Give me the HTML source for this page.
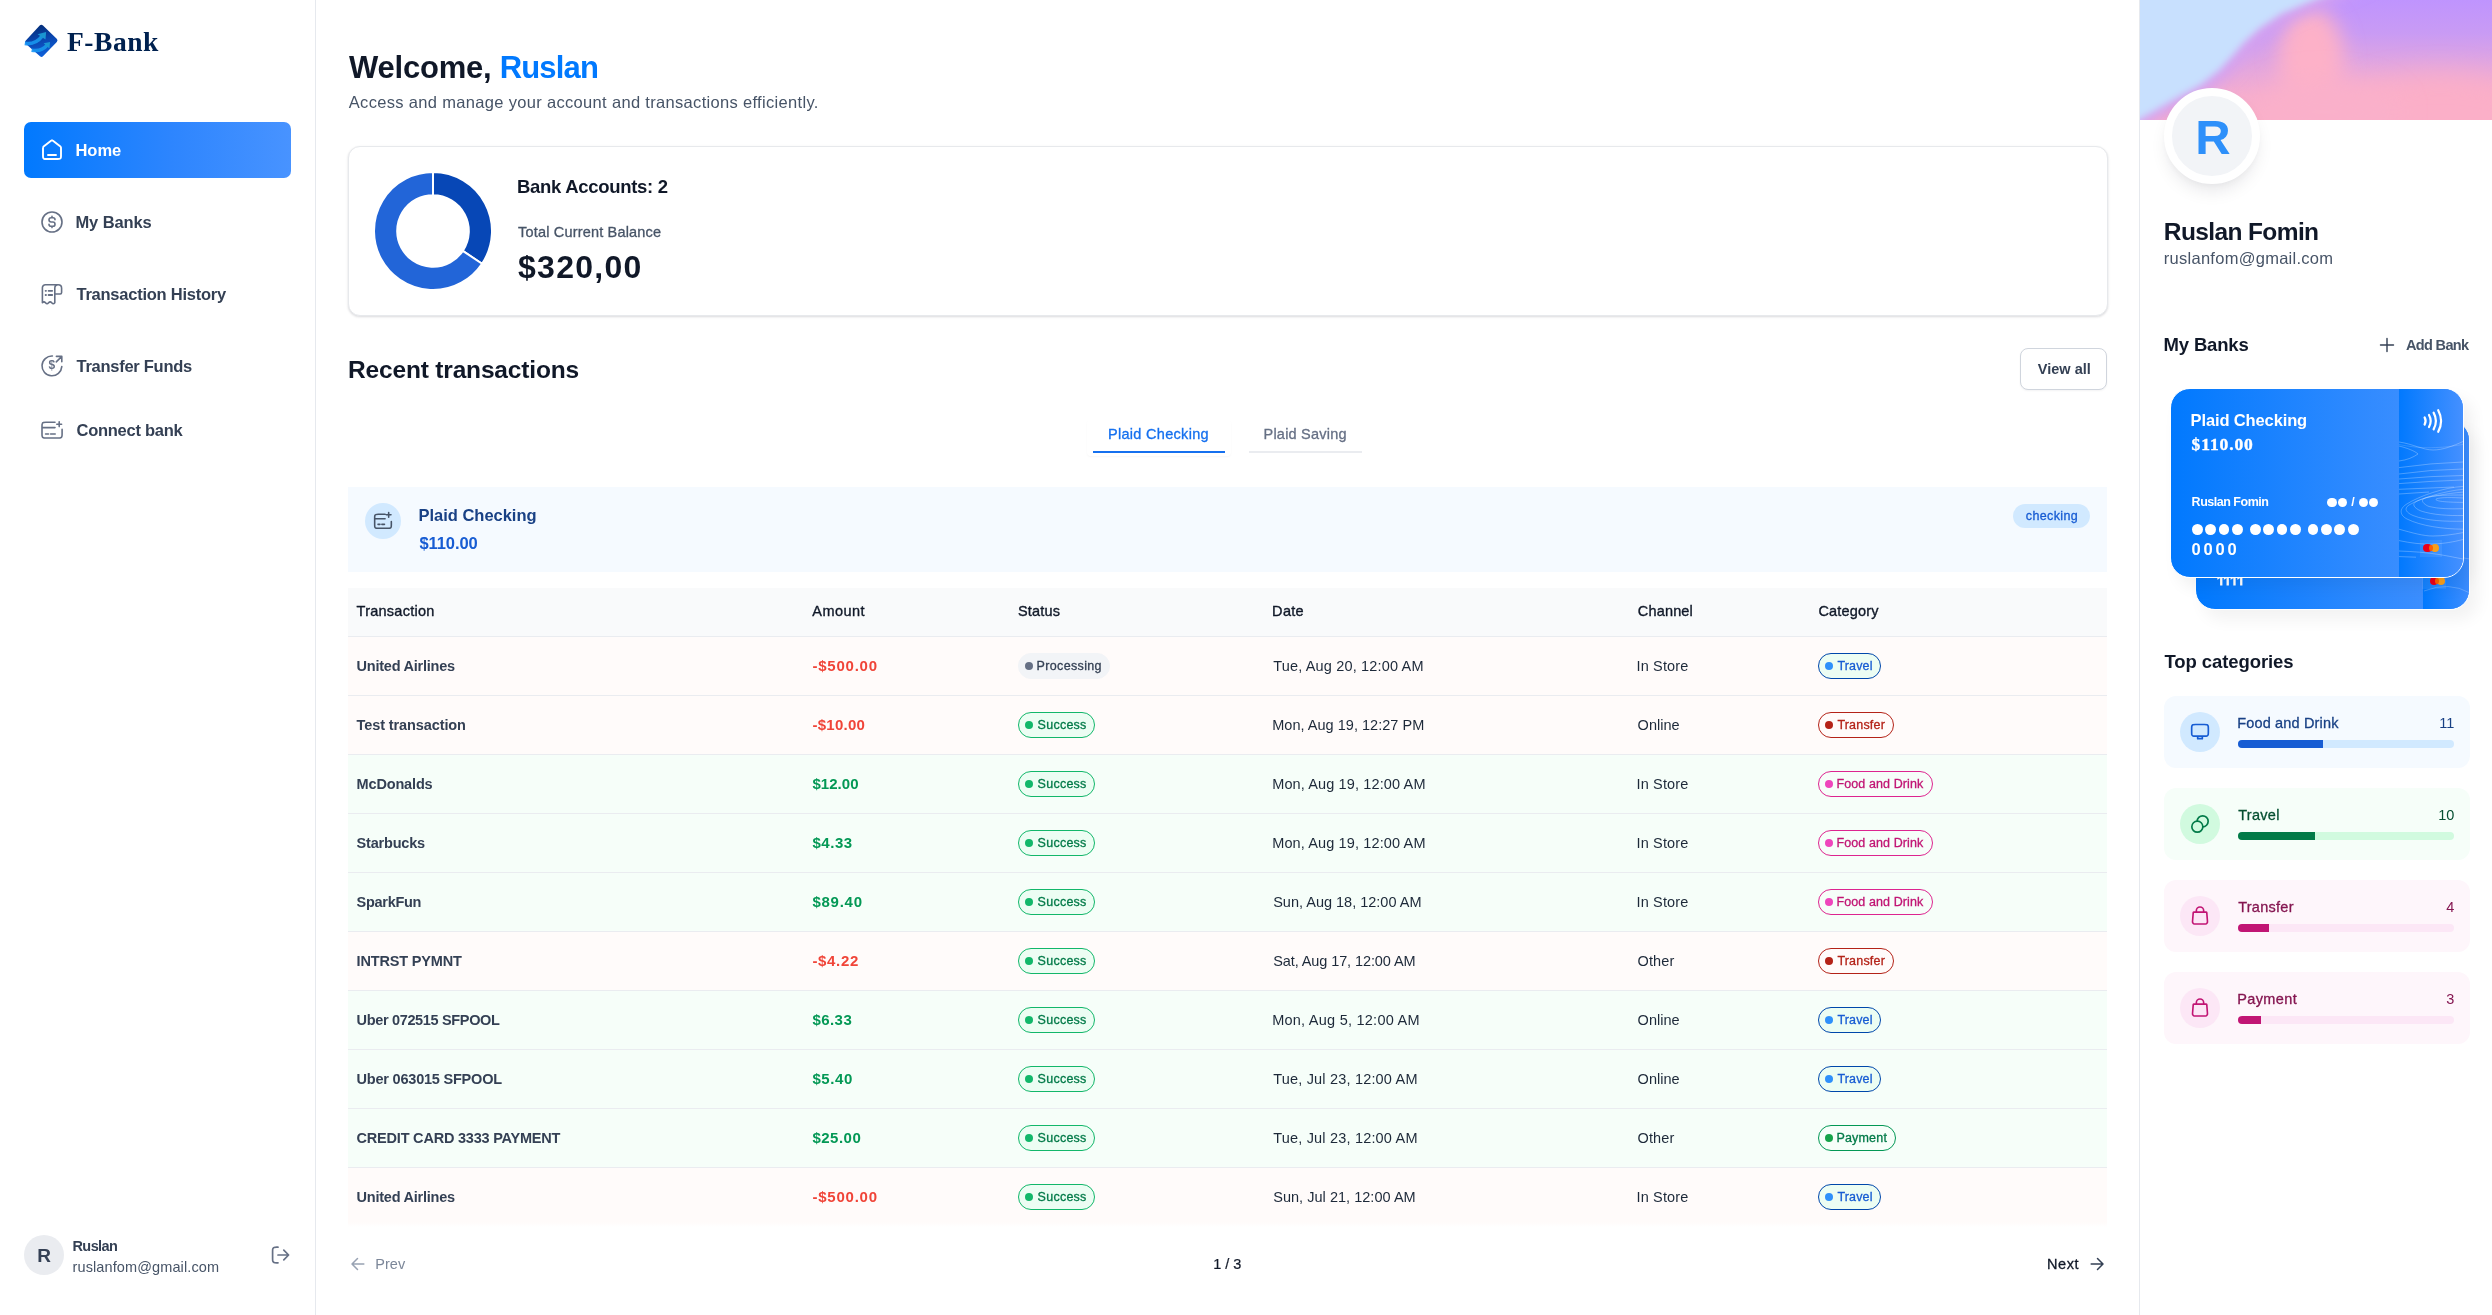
<!DOCTYPE html>
<html lang="en"><head><meta charset="utf-8"><title>F-Bank</title>
<style>
*{box-sizing:border-box;margin:0;padding:0}
html,body{width:2492px;height:1315px;overflow:hidden;background:#fff}
body{position:relative;font-family:"Liberation Sans",sans-serif;color:#101828;will-change:transform}
.t{position:absolute;white-space:nowrap}
.b{position:absolute}
svg{position:absolute;overflow:visible}
.ico{fill:none;stroke:#667085;stroke-width:1.6;stroke-linecap:round;stroke-linejoin:round}
</style></head><body>

<aside>
<div class="b" style="left:315px;top:0px;width:1px;height:1315px;background:#e6e9ee"></div>
<svg style="left:23px;top:23px" width="36" height="36" viewBox="0 0 36 36">
<defs><linearGradient id="lg1" x1="0.35" y1="0" x2="0.6" y2="1"><stop offset="0" stop-color="#032c74"/><stop offset="0.45" stop-color="#0a45ae"/><stop offset="1" stop-color="#0f62dc"/></linearGradient>
<linearGradient id="lg2" gradientUnits="userSpaceOnUse" x1="2" y1="28" x2="26" y2="10"><stop offset="0" stop-color="#1592fb"/><stop offset="0.6" stop-color="#1a98ea"/><stop offset="1" stop-color="#1fa3cf"/></linearGradient></defs>
<path d="M16.700 2.500Q18.300.8 20 2.500L33.700 15.800Q35.300 17.400 33.800 19L20.200 33.100Q18.600 34.700 17 33.300L2.700 20.800Q1.100 19.300 2.600 17.700Z" fill="url(#lg1)"/>
<g opacity=".9"><path d="M1.800 20.300Q12.500 22 19.300 13" fill="none" stroke="url(#lg2)" stroke-width="3.700"/><path d="M14.600 11.300L23.100 9.100L22.500 16.600Z" fill="#1d9fd6"/>
<path d="M8.600 27.200Q18.500 29 24.200 22.200" fill="none" stroke="url(#lg2)" stroke-width="3.500"/><path d="M20.600 20.200L27.100 18.900L26.400 25.600Z" fill="#1d9fd6"/></g>
</svg>
<span class="t" style="top:22px;font-size:27.5px;line-height:39px;color:#00214f;left:67px;font-weight:700;font-family:'Liberation Serif',serif;letter-spacing:0.532px;">F-Bank</span>
<div class="b" style="left:24px;top:122px;width:267px;height:56px;border-radius:7px;background:linear-gradient(90deg,#0179fe 0%,#2d85fe 55%,#4893ff 100%)"></div>
<svg style="left:40px;top:138px" width="24" height="24" viewBox="0 0 24 24" fill="none" stroke="#fff" stroke-width="1.9" stroke-linecap="round" stroke-linejoin="round">
<path d="M8 17h8M11.02 2.76 4.24 8.04c-.45.35-.68.53-.84.75a2 2 0 0 0-.32.65C3 9.7 3 9.99 3 10.57V17.8c0 1.12 0 1.68.22 2.1.19.38.5.69.87.88.43.22.99.22 2.11.22h11.6c1.12 0 1.68 0 2.1-.22.38-.19.69-.5.88-.87.22-.43.22-.99.22-2.11v-7.23c0-.58 0-.87-.07-1.13a2 2 0 0 0-.32-.65c-.16-.22-.39-.4-.84-.75l-6.79-5.28c-.35-.27-.52-.41-.72-.46a1 1 0 0 0-.52 0c-.2.05-.37.19-.72.46Z"/></svg>
<span class="t" style="top:138px;font-size:16.5px;line-height:24px;color:#fff;left:75.5px;font-weight:700;letter-spacing:-0.055px;">Home</span>
<svg class="ico" style="left:40px;top:210px" width="24" height="24" viewBox="0 0 24 24"><circle cx="12" cy="12" r="10"/><path transform="translate(12 12) scale(.86) translate(-12 -12)" stroke-width="1.850" d="M8.500 14.670c0 1.290 1.040 2.330 2.330 2.330H13a2.500 2.500 0 0 0 0-5h-2a2.500 2.500 0 0 1 0-5h2.170c1.290 0 2.330 1.040 2.330 2.330M12 5.500V7m0 10v1.500"/></svg>
<span class="t" style="top:210px;font-size:16.5px;line-height:24px;color:#344054;left:75.5px;font-weight:700;letter-spacing:-0.122px;">My Banks</span>
<svg class="ico" style="left:40px;top:282px" width="24" height="24" viewBox="0 0 24 24"><path d="M14.800 20.800V6.200c0-1.900 1.500-3.400 3.400-3.400s3.400 1.500 3.400 3.400v4.400c0 .800-.600 1.400-1.400 1.400h-5.400M18.200 2.800H5.400c-1.700 0-3 1.300-3 3v15c1.050-1.200 2.050-1.200 3.100 0s2.050 1.200 3.100 0 2.050-1.200 3.100 0 2.050 1.200 3.100 0"/><path d="M5.600 8.800h.4M8.600 8.800h3.600M5.600 13h.4M8.600 13h3.600" stroke-width="1.800"/></svg>
<span class="t" style="top:282px;font-size:16.5px;line-height:24px;color:#344054;left:76.5px;font-weight:700;letter-spacing:-0.243px;">Transaction History</span>
<svg class="ico" style="left:40px;top:354px" width="24" height="24" viewBox="0 0 24 24"><path d="M21.800 12.600A9.900 9.900 0 1 1 12.400 2M16.400 2.400h5.400v5.400M21.600 2.600l-5.300 5.300"/><text x="11.900" y="15.300" text-anchor="middle" font-family="Liberation Sans,sans-serif" font-weight="700" font-size="12" fill="#667085" stroke="none">$</text></svg>
<span class="t" style="top:354px;font-size:16.5px;line-height:24px;color:#344054;left:76.5px;font-weight:700;letter-spacing:-0.270px;">Transfer Funds</span>
<svg class="ico" style="left:40px;top:418px" width="24" height="24" viewBox="0 0 24 24"><path d="M15 4.200H6c-1.400 0-2.100 0-2.600.300-.500.200-.900.600-1.100 1.100-.300.500-.300 1.200-.300 2.600v7.800c0 1.400 0 2.100.300 2.600.200.500.600.900 1.100 1.100.500.300 1.200.300 2.600.300h12.100c1.400 0 2.100 0 2.600-.300.500-.200.900-.600 1.100-1.100.300-.500.300-1.200.300-2.600v-4.600M2.200 9.600H15M19.200 3.800v4.800M16.800 6.200h4.800M5.600 16h2.900M10.600 16h4.600"/></svg>
<span class="t" style="top:418px;font-size:16.5px;line-height:24px;color:#344054;left:76.5px;font-weight:700;letter-spacing:-0.265px;">Connect bank</span>
<div class="b" style="left:24px;top:1235px;width:40px;height:40px;border-radius:50%;background:#eaecf0"></div>
<span class="t" style="top:1242px;font-size:19px;line-height:27px;color:#344054;left:37.2px;font-weight:700;">R</span>
<span class="t" style="top:1236px;font-size:14.5px;line-height:20px;color:#344054;left:72.5px;font-weight:700;letter-spacing:-0.597px;">Ruslan</span>
<span class="t" style="top:1257px;font-size:14.5px;line-height:20px;color:#475467;left:72.5px;letter-spacing:0.118px;">ruslanfom@gmail.com</span>
<svg class="ico" style="left:269px;top:1243px;stroke-width:1.700" width="24" height="24" viewBox="0 0 24 24"><path d="M9 4.200H7.600c-1.400 0-2.100 0-2.600.3-.5.200-.800.600-1.100 1.100-.3.500-.3 1.200-.3 2.600v7.600c0 1.400 0 2.100.3 2.600.2.500.6.800 1.100 1.100.5.300 1.200.3 2.600.3H9M14.800 7.200l4.800 4.800-4.800 4.800M19.400 12H9"/></svg>
</aside>
<main>
<span class="t" style="top:48px;font-size:31px;line-height:39px;color:#101828;left:349px;font-weight:700;letter-spacing:-0.219px;">Welcome,</span>
<span class="t" style="top:48px;font-size:31px;line-height:39px;color:#0179fe;left:499.7px;font-weight:700;letter-spacing:-0.823px;">Ruslan</span>
<span class="t" style="top:90px;font-size:16.5px;line-height:24px;color:#475467;left:348.8px;letter-spacing:0.321px;">Access and manage your account and transactions efficiently.</span>
<div class="b" style="left:348px;top:146px;width:1760px;height:170px;border:1px solid #e7e9ec;border-radius:12px;background:#fff;box-shadow:0 1px 3px rgba(16,24,40,.10),0 1px 2px rgba(16,24,40,.06)"></div>
<svg style="left:373px;top:171px" width="120" height="120" viewBox="0 0 120 120">
<path d="M60.00 1.00A59 59 0 0 1 109.06 92.78L89.77 79.89A35.8 35.8 0 0 0 60.00 24.20Z" fill="#0747b6" stroke="#fff" stroke-width="2" stroke-linejoin="round"/>
<path d="M109.06 92.78A59 59 0 1 1 60.00 1.00L60.00 24.20A35.8 35.8 0 1 0 89.77 79.89Z" fill="#2265d8" stroke="#fff" stroke-width="2" stroke-linejoin="round"/>
</svg>
<span class="t" style="top:173px;font-size:18.5px;line-height:27px;color:#101828;left:517px;font-weight:700;letter-spacing:-0.298px;">Bank Accounts: 2</span>
<span class="t" style="top:222px;font-size:14.5px;line-height:20px;color:#475467;left:518px;letter-spacing:0.181px;-webkit-text-stroke:0.3px #475467;">Total Current Balance</span>
<span class="t" style="top:248px;font-size:32px;line-height:38px;color:#101828;left:518px;font-weight:700;letter-spacing:1.271px;">$320,00</span>
<span class="t" style="top:354px;font-size:24.5px;line-height:31px;color:#101828;left:348px;font-weight:700;letter-spacing:-0.170px;">Recent transactions</span>
<div class="b" style="left:2020px;top:348px;width:87px;height:42px;border:1px solid #d0d5dd;border-radius:8px;background:#fff;box-shadow:0 1px 2px rgba(16,24,40,.05)"></div>
<span class="t" style="top:359px;font-size:14.5px;line-height:20px;color:#344054;left:2037.8px;font-weight:700;letter-spacing:0.014px;">View all</span>
<div class="b" style="left:1087px;top:420px;width:144px;height:36px;border-radius:4px;box-shadow:0 1px 2px rgba(16,24,40,.035)"></div>
<span class="t" style="top:424px;font-size:14.5px;line-height:20px;color:#1570ef;left:1108px;letter-spacing:0.296px;-webkit-text-stroke:0.3px #1570ef;">Plaid Checking</span>
<div class="b" style="left:1093px;top:450.5px;width:132px;height:2px;background:#1570ef"></div>
<span class="t" style="top:424px;font-size:14.5px;line-height:20px;color:#667085;left:1263.5px;letter-spacing:0.223px;-webkit-text-stroke:0.3px #667085;">Plaid Saving</span>
<div class="b" style="left:1249px;top:450.5px;width:113px;height:2px;background:#eaecf0"></div>
<div class="b" style="left:348px;top:487px;width:1759px;height:84.5px;background:#f5faff"></div>
<div class="b" style="left:365px;top:503px;width:36px;height:36px;border-radius:50%;background:#d1e9ff"></div>
<svg class="ico" style="left:373px;top:511px;stroke:#475467;stroke-width:1.900" width="20" height="20" viewBox="0 0 24 24"><path d="M14.500 4H6.200c-1.600 0-2.400 0-3 .4-.4.200-.700.500-.900.900-.3.600-.3 1.400-.3 3v8.200c0 1.600 0 2.400.3 3 .2.400.5.700.900.900.6.300 1.400.3 3 .3h11.600c1.600 0 2.400 0 3-.3.400-.2.700-.5.900-.9.300-.6.300-1.400.3-3v-4M2.200 9.200h12.300M18.800 1.800v5.600M16 4.600h5.600M6 16h2.400M10.600 16h3.200"/></svg>
<span class="t" style="top:503px;font-size:16.5px;line-height:24px;color:#194185;left:418.5px;font-weight:700;letter-spacing:-0.015px;">Plaid Checking</span>
<span class="t" style="top:531px;font-size:16.5px;line-height:24px;color:#175cd3;left:419.5px;font-weight:700;letter-spacing:-0.093px;">$110.00</span>
<div class="b" style="left:2013px;top:503.5px;width:77px;height:24px;border-radius:12px;background:#d1e9ff"></div>
<span class="t" style="top:507px;font-size:12.5px;line-height:18px;color:#175cd3;left:2025.8px;letter-spacing:0.374px;-webkit-text-stroke:0.3px #175cd3;">checking</span>
<div class="b" style="left:348px;top:588px;width:1759px;height:48.5px;background:#f9fafb"></div>
<div class="b" style="left:348px;top:636px;width:1759px;height:1px;background:#eaecf0"></div>
<span class="t" style="top:601px;font-size:14.5px;line-height:20px;color:#101828;left:356.6px;letter-spacing:0.245px;-webkit-text-stroke:0.35px #101828;">Transaction</span>
<span class="t" style="top:601px;font-size:14.5px;line-height:20px;color:#101828;left:812.3px;letter-spacing:0.451px;-webkit-text-stroke:0.35px #101828;">Amount</span>
<span class="t" style="top:601px;font-size:14.5px;line-height:20px;color:#101828;left:1018px;letter-spacing:0.169px;-webkit-text-stroke:0.35px #101828;">Status</span>
<span class="t" style="top:601px;font-size:14.5px;line-height:20px;color:#101828;left:1272.1px;letter-spacing:0.312px;-webkit-text-stroke:0.35px #101828;">Date</span>
<span class="t" style="top:601px;font-size:14.5px;line-height:20px;color:#101828;left:1637.8px;letter-spacing:0.168px;-webkit-text-stroke:0.35px #101828;">Channel</span>
<span class="t" style="top:601px;font-size:14.5px;line-height:20px;color:#101828;left:1818.4px;letter-spacing:0.174px;-webkit-text-stroke:0.35px #101828;">Category</span>
<div class="b" style="left:348px;top:637px;width:1759px;height:58px;background:#fffbfa"></div>
<div class="b" style="left:348px;top:695px;width:1759px;height:1px;background:#eaecf0"></div>
<span class="t" style="top:656px;font-size:14.5px;line-height:20px;color:#344054;left:356.6px;font-weight:700;letter-spacing:-0.233px;">United Airlines</span>
<span class="t" style="top:655px;font-size:15px;line-height:21px;color:#f04438;left:812.4px;font-weight:700;letter-spacing:0.775px;">-$500.00</span>
<div class="b" style="left:1018px;top:653.2px;width:91.5px;height:25.6px;border:1.5px solid #f2f4f7;border-radius:13px;background:#f2f4f7"></div><div class="b" style="left:1025.2px;top:662px;width:8px;height:8px;border-radius:50%;background:#667085"></div><span class="t" style="top:657px;font-size:12.5px;line-height:18px;color:#344054;left:1036.6px;letter-spacing:0.346px;-webkit-text-stroke:0.3px #344054;">Processing</span>
<span class="t" style="top:656px;font-size:14.5px;line-height:20px;color:#1d2939;left:1273.2px;letter-spacing:0.165px;">Tue, Aug 20, 12:00 AM</span>
<span class="t" style="top:656px;font-size:14.5px;line-height:20px;color:#1d2939;left:1636.6px;letter-spacing:0.127px;">In Store</span>
<div class="b" style="left:1817.8px;top:653.2px;width:63.3px;height:25.6px;border:1.5px solid #0047ab;border-radius:13px;background:#ecfdf3"></div><div class="b" style="left:1825.0px;top:662px;width:8px;height:8px;border-radius:50%;background:#2e90fa"></div><span class="t" style="top:657px;font-size:12.5px;line-height:18px;color:#175cd3;left:1837.4px;letter-spacing:0.162px;-webkit-text-stroke:0.3px #175cd3;">Travel</span>
<div class="b" style="left:348px;top:696px;width:1759px;height:58px;background:#fffbfa"></div>
<div class="b" style="left:348px;top:754px;width:1759px;height:1px;background:#eaecf0"></div>
<span class="t" style="top:715px;font-size:14.5px;line-height:20px;color:#344054;left:356.6px;font-weight:700;letter-spacing:-0.104px;">Test transaction</span>
<span class="t" style="top:714px;font-size:15px;line-height:21px;color:#f04438;left:812.4px;font-weight:700;letter-spacing:0.278px;">-$10.00</span>
<div class="b" style="left:1018px;top:712.2px;width:77px;height:25.6px;border:1.5px solid #12b76a;border-radius:13px;background:#ecfdf3"></div><div class="b" style="left:1025.2px;top:721px;width:8px;height:8px;border-radius:50%;background:#12b76a"></div><span class="t" style="top:716px;font-size:12.5px;line-height:18px;color:#027a48;left:1037.6px;letter-spacing:0.251px;-webkit-text-stroke:0.3px #027a48;">Success</span>
<span class="t" style="top:715px;font-size:14.5px;line-height:20px;color:#1d2939;left:1272.2px;letter-spacing:0.027px;">Mon, Aug 19, 12:27 PM</span>
<span class="t" style="top:715px;font-size:14.5px;line-height:20px;color:#1d2939;left:1637.6px;letter-spacing:0.010px;">Online</span>
<div class="b" style="left:1817.8px;top:712.2px;width:76px;height:25.6px;border:1.5px solid #b42318;border-radius:13px;background:transparent"></div><div class="b" style="left:1825.0px;top:721px;width:8px;height:8px;border-radius:50%;background:#b42318"></div><span class="t" style="top:716px;font-size:12.5px;line-height:18px;color:#b42318;left:1837.4px;letter-spacing:0.198px;-webkit-text-stroke:0.3px #b42318;">Transfer</span>
<div class="b" style="left:348px;top:755px;width:1759px;height:58px;background:#f6fef9"></div>
<div class="b" style="left:348px;top:813px;width:1759px;height:1px;background:#eaecf0"></div>
<span class="t" style="top:774px;font-size:14.5px;line-height:20px;color:#344054;left:356.6px;font-weight:700;letter-spacing:-0.160px;">McDonalds</span>
<span class="t" style="top:773px;font-size:15px;line-height:21px;color:#039855;left:812.4px;font-weight:700;letter-spacing:0.053px;">$12.00</span>
<div class="b" style="left:1018px;top:771.2px;width:77px;height:25.6px;border:1.5px solid #12b76a;border-radius:13px;background:#ecfdf3"></div><div class="b" style="left:1025.2px;top:780px;width:8px;height:8px;border-radius:50%;background:#12b76a"></div><span class="t" style="top:775px;font-size:12.5px;line-height:18px;color:#027a48;left:1037.6px;letter-spacing:0.251px;-webkit-text-stroke:0.3px #027a48;">Success</span>
<span class="t" style="top:774px;font-size:14.5px;line-height:20px;color:#1d2939;left:1272.2px;letter-spacing:0.127px;">Mon, Aug 19, 12:00 AM</span>
<span class="t" style="top:774px;font-size:14.5px;line-height:20px;color:#1d2939;left:1636.6px;letter-spacing:0.127px;">In Store</span>
<div class="b" style="left:1817.8px;top:771.2px;width:115px;height:25.6px;border:1.5px solid #dd2590;border-radius:13px;background:transparent"></div><div class="b" style="left:1825.0px;top:780px;width:8px;height:8px;border-radius:50%;background:#ee46bc"></div><span class="t" style="top:775px;font-size:12.5px;line-height:18px;color:#c11574;left:1836.4px;letter-spacing:0.107px;-webkit-text-stroke:0.3px #c11574;">Food and Drink</span>
<div class="b" style="left:348px;top:814px;width:1759px;height:58px;background:#f6fef9"></div>
<div class="b" style="left:348px;top:872px;width:1759px;height:1px;background:#eaecf0"></div>
<span class="t" style="top:833px;font-size:14.5px;line-height:20px;color:#344054;left:356.6px;font-weight:700;letter-spacing:-0.194px;">Starbucks</span>
<span class="t" style="top:832px;font-size:15px;line-height:21px;color:#039855;left:812.4px;font-weight:700;letter-spacing:0.551px;">$4.33</span>
<div class="b" style="left:1018px;top:830.2px;width:77px;height:25.6px;border:1.5px solid #12b76a;border-radius:13px;background:#ecfdf3"></div><div class="b" style="left:1025.2px;top:839px;width:8px;height:8px;border-radius:50%;background:#12b76a"></div><span class="t" style="top:834px;font-size:12.5px;line-height:18px;color:#027a48;left:1037.6px;letter-spacing:0.251px;-webkit-text-stroke:0.3px #027a48;">Success</span>
<span class="t" style="top:833px;font-size:14.5px;line-height:20px;color:#1d2939;left:1272.2px;letter-spacing:0.127px;">Mon, Aug 19, 12:00 AM</span>
<span class="t" style="top:833px;font-size:14.5px;line-height:20px;color:#1d2939;left:1636.6px;letter-spacing:0.127px;">In Store</span>
<div class="b" style="left:1817.8px;top:830.2px;width:115px;height:25.6px;border:1.5px solid #dd2590;border-radius:13px;background:transparent"></div><div class="b" style="left:1825.0px;top:839px;width:8px;height:8px;border-radius:50%;background:#ee46bc"></div><span class="t" style="top:834px;font-size:12.5px;line-height:18px;color:#c11574;left:1836.4px;letter-spacing:0.107px;-webkit-text-stroke:0.3px #c11574;">Food and Drink</span>
<div class="b" style="left:348px;top:873px;width:1759px;height:58px;background:#f6fef9"></div>
<div class="b" style="left:348px;top:931px;width:1759px;height:1px;background:#eaecf0"></div>
<span class="t" style="top:892px;font-size:14.5px;line-height:20px;color:#344054;left:356.6px;font-weight:700;letter-spacing:-0.288px;">SparkFun</span>
<span class="t" style="top:891px;font-size:15px;line-height:21px;color:#039855;left:812.4px;font-weight:700;letter-spacing:0.753px;">$89.40</span>
<div class="b" style="left:1018px;top:889.2px;width:77px;height:25.6px;border:1.5px solid #12b76a;border-radius:13px;background:#ecfdf3"></div><div class="b" style="left:1025.2px;top:898px;width:8px;height:8px;border-radius:50%;background:#12b76a"></div><span class="t" style="top:893px;font-size:12.5px;line-height:18px;color:#027a48;left:1037.6px;letter-spacing:0.251px;-webkit-text-stroke:0.3px #027a48;">Success</span>
<span class="t" style="top:892px;font-size:14.5px;line-height:20px;color:#1d2939;left:1273.2px;letter-spacing:-0.003px;">Sun, Aug 18, 12:00 AM</span>
<span class="t" style="top:892px;font-size:14.5px;line-height:20px;color:#1d2939;left:1636.6px;letter-spacing:0.127px;">In Store</span>
<div class="b" style="left:1817.8px;top:889.2px;width:115px;height:25.6px;border:1.5px solid #dd2590;border-radius:13px;background:transparent"></div><div class="b" style="left:1825.0px;top:898px;width:8px;height:8px;border-radius:50%;background:#ee46bc"></div><span class="t" style="top:893px;font-size:12.5px;line-height:18px;color:#c11574;left:1836.4px;letter-spacing:0.107px;-webkit-text-stroke:0.3px #c11574;">Food and Drink</span>
<div class="b" style="left:348px;top:932px;width:1759px;height:58px;background:#fffbfa"></div>
<div class="b" style="left:348px;top:990px;width:1759px;height:1px;background:#eaecf0"></div>
<span class="t" style="top:951px;font-size:14.5px;line-height:20px;color:#344054;left:356.6px;font-weight:700;letter-spacing:-0.162px;">INTRST PYMNT</span>
<span class="t" style="top:950px;font-size:15px;line-height:21px;color:#f04438;left:812.4px;font-weight:700;letter-spacing:0.662px;">-$4.22</span>
<div class="b" style="left:1018px;top:948.2px;width:77px;height:25.6px;border:1.5px solid #12b76a;border-radius:13px;background:#ecfdf3"></div><div class="b" style="left:1025.2px;top:957px;width:8px;height:8px;border-radius:50%;background:#12b76a"></div><span class="t" style="top:952px;font-size:12.5px;line-height:18px;color:#027a48;left:1037.6px;letter-spacing:0.251px;-webkit-text-stroke:0.3px #027a48;">Success</span>
<span class="t" style="top:951px;font-size:14.5px;line-height:20px;color:#1d2939;left:1273.2px;letter-spacing:-0.096px;">Sat, Aug 17, 12:00 AM</span>
<span class="t" style="top:951px;font-size:14.5px;line-height:20px;color:#1d2939;left:1637.6px;letter-spacing:0.091px;">Other</span>
<div class="b" style="left:1817.8px;top:948.2px;width:76px;height:25.6px;border:1.5px solid #b42318;border-radius:13px;background:transparent"></div><div class="b" style="left:1825.0px;top:957px;width:8px;height:8px;border-radius:50%;background:#b42318"></div><span class="t" style="top:952px;font-size:12.5px;line-height:18px;color:#b42318;left:1837.4px;letter-spacing:0.198px;-webkit-text-stroke:0.3px #b42318;">Transfer</span>
<div class="b" style="left:348px;top:991px;width:1759px;height:58px;background:#f6fef9"></div>
<div class="b" style="left:348px;top:1049px;width:1759px;height:1px;background:#eaecf0"></div>
<span class="t" style="top:1010px;font-size:14.5px;line-height:20px;color:#344054;left:356.6px;font-weight:700;letter-spacing:-0.343px;">Uber 072515 SFPOOL</span>
<span class="t" style="top:1009px;font-size:15px;line-height:21px;color:#039855;left:812.4px;font-weight:700;letter-spacing:0.451px;">$6.33</span>
<div class="b" style="left:1018px;top:1007.2px;width:77px;height:25.6px;border:1.5px solid #12b76a;border-radius:13px;background:#ecfdf3"></div><div class="b" style="left:1025.2px;top:1016px;width:8px;height:8px;border-radius:50%;background:#12b76a"></div><span class="t" style="top:1011px;font-size:12.5px;line-height:18px;color:#027a48;left:1037.6px;letter-spacing:0.251px;-webkit-text-stroke:0.3px #027a48;">Success</span>
<span class="t" style="top:1010px;font-size:14.5px;line-height:20px;color:#1d2939;left:1272.2px;letter-spacing:0.242px;">Mon, Aug 5, 12:00 AM</span>
<span class="t" style="top:1010px;font-size:14.5px;line-height:20px;color:#1d2939;left:1637.6px;letter-spacing:0.010px;">Online</span>
<div class="b" style="left:1817.8px;top:1007.2px;width:63.3px;height:25.6px;border:1.5px solid #0047ab;border-radius:13px;background:#ecfdf3"></div><div class="b" style="left:1825.0px;top:1016px;width:8px;height:8px;border-radius:50%;background:#2e90fa"></div><span class="t" style="top:1011px;font-size:12.5px;line-height:18px;color:#175cd3;left:1837.4px;letter-spacing:0.162px;-webkit-text-stroke:0.3px #175cd3;">Travel</span>
<div class="b" style="left:348px;top:1050px;width:1759px;height:58px;background:#f6fef9"></div>
<div class="b" style="left:348px;top:1108px;width:1759px;height:1px;background:#eaecf0"></div>
<span class="t" style="top:1069px;font-size:14.5px;line-height:20px;color:#344054;left:356.6px;font-weight:700;letter-spacing:-0.214px;">Uber 063015 SFPOOL</span>
<span class="t" style="top:1068px;font-size:15px;line-height:21px;color:#039855;left:812.4px;font-weight:700;letter-spacing:0.626px;">$5.40</span>
<div class="b" style="left:1018px;top:1066.2px;width:77px;height:25.6px;border:1.5px solid #12b76a;border-radius:13px;background:#ecfdf3"></div><div class="b" style="left:1025.2px;top:1075px;width:8px;height:8px;border-radius:50%;background:#12b76a"></div><span class="t" style="top:1070px;font-size:12.5px;line-height:18px;color:#027a48;left:1037.6px;letter-spacing:0.251px;-webkit-text-stroke:0.3px #027a48;">Success</span>
<span class="t" style="top:1069px;font-size:14.5px;line-height:20px;color:#1d2939;left:1273.2px;letter-spacing:0.188px;">Tue, Jul 23, 12:00 AM</span>
<span class="t" style="top:1069px;font-size:14.5px;line-height:20px;color:#1d2939;left:1637.6px;letter-spacing:0.010px;">Online</span>
<div class="b" style="left:1817.8px;top:1066.2px;width:63.3px;height:25.6px;border:1.5px solid #0047ab;border-radius:13px;background:#ecfdf3"></div><div class="b" style="left:1825.0px;top:1075px;width:8px;height:8px;border-radius:50%;background:#2e90fa"></div><span class="t" style="top:1070px;font-size:12.5px;line-height:18px;color:#175cd3;left:1837.4px;letter-spacing:0.162px;-webkit-text-stroke:0.3px #175cd3;">Travel</span>
<div class="b" style="left:348px;top:1109px;width:1759px;height:58px;background:#f6fef9"></div>
<div class="b" style="left:348px;top:1167px;width:1759px;height:1px;background:#eaecf0"></div>
<span class="t" style="top:1128px;font-size:14.5px;line-height:20px;color:#344054;left:356.6px;font-weight:700;letter-spacing:-0.210px;">CREDIT CARD 3333 PAYMENT</span>
<span class="t" style="top:1127px;font-size:15px;line-height:21px;color:#039855;left:812.4px;font-weight:700;letter-spacing:0.493px;">$25.00</span>
<div class="b" style="left:1018px;top:1125.2px;width:77px;height:25.6px;border:1.5px solid #12b76a;border-radius:13px;background:#ecfdf3"></div><div class="b" style="left:1025.2px;top:1134px;width:8px;height:8px;border-radius:50%;background:#12b76a"></div><span class="t" style="top:1129px;font-size:12.5px;line-height:18px;color:#027a48;left:1037.6px;letter-spacing:0.251px;-webkit-text-stroke:0.3px #027a48;">Success</span>
<span class="t" style="top:1128px;font-size:14.5px;line-height:20px;color:#1d2939;left:1273.2px;letter-spacing:0.188px;">Tue, Jul 23, 12:00 AM</span>
<span class="t" style="top:1128px;font-size:14.5px;line-height:20px;color:#1d2939;left:1637.6px;letter-spacing:0.091px;">Other</span>
<div class="b" style="left:1817.8px;top:1125.2px;width:78px;height:25.6px;border:1.5px solid #039855;border-radius:13px;background:transparent"></div><div class="b" style="left:1825.0px;top:1134px;width:8px;height:8px;border-radius:50%;background:#16a34a"></div><span class="t" style="top:1129px;font-size:12.5px;line-height:18px;color:#027a48;left:1836.4px;letter-spacing:0.191px;-webkit-text-stroke:0.3px #027a48;">Payment</span>
<div class="b" style="left:348px;top:1168px;width:1759px;height:59px;background:#fffbfa;background:linear-gradient(180deg,#fffbfa 0,#fffbfa 92%,#fff 100%)"></div>
<span class="t" style="top:1187px;font-size:14.5px;line-height:20px;color:#344054;left:356.6px;font-weight:700;letter-spacing:-0.233px;">United Airlines</span>
<span class="t" style="top:1186px;font-size:15px;line-height:21px;color:#f04438;left:812.4px;font-weight:700;letter-spacing:0.775px;">-$500.00</span>
<div class="b" style="left:1018px;top:1184.2px;width:77px;height:25.6px;border:1.5px solid #12b76a;border-radius:13px;background:#ecfdf3"></div><div class="b" style="left:1025.2px;top:1193px;width:8px;height:8px;border-radius:50%;background:#12b76a"></div><span class="t" style="top:1188px;font-size:12.5px;line-height:18px;color:#027a48;left:1037.6px;letter-spacing:0.251px;-webkit-text-stroke:0.3px #027a48;">Success</span>
<span class="t" style="top:1187px;font-size:14.5px;line-height:20px;color:#1d2939;left:1273.2px;letter-spacing:0.030px;">Sun, Jul 21, 12:00 AM</span>
<span class="t" style="top:1187px;font-size:14.5px;line-height:20px;color:#1d2939;left:1636.6px;letter-spacing:0.127px;">In Store</span>
<div class="b" style="left:1817.8px;top:1184.2px;width:63.3px;height:25.6px;border:1.5px solid #0047ab;border-radius:13px;background:#ecfdf3"></div><div class="b" style="left:1825.0px;top:1193px;width:8px;height:8px;border-radius:50%;background:#2e90fa"></div><span class="t" style="top:1188px;font-size:12.5px;line-height:18px;color:#175cd3;left:1837.4px;letter-spacing:0.162px;-webkit-text-stroke:0.3px #175cd3;">Travel</span>
<svg class="ico" style="left:348px;top:1254px;stroke:#98a2b3;stroke-width:1.800" width="20" height="20" viewBox="0 0 24 24"><path d="M19 12H5.200M11.400 5.400 4.800 12l6.600 6.600"/></svg>
<span class="t" style="top:1254px;font-size:14.5px;line-height:20px;color:#7c8799;left:375.2px;letter-spacing:0.079px;">Prev</span>
<span class="t" style="top:1254px;font-size:14.5px;line-height:20px;color:#101828;left:927.3px;width:600px;text-align:center;-webkit-text-stroke:0.2px #101828;">1 / 3</span>
<span class="t" style="top:1254px;font-size:14.5px;line-height:20px;color:#101828;left:2047px;letter-spacing:0.571px;-webkit-text-stroke:0.3px #101828;">Next</span>
<svg class="ico" style="left:2087px;top:1254px;stroke:#344054;stroke-width:1.800" width="20" height="20" viewBox="0 0 24 24"><path d="M5 12h13.800M12.600 5.400l6.600 6.600-6.600 6.600"/></svg>
</main>
<aside>
<div class="b" style="left:2139px;top:0px;width:1px;height:1315px;background:#e6e9ee"></div>
<svg style="left:2140px;top:0;overflow:hidden" width="352" height="120" viewBox="0 0 352 120">
<defs><linearGradient id="bn0" x1="0" y1="0" x2="0" y2="1"><stop offset="0" stop-color="#bf94fe"/><stop offset=".28" stop-color="#c99bf4"/><stop offset=".55" stop-color="#e2a6df"/><stop offset=".8" stop-color="#f5adce"/><stop offset="1" stop-color="#fbafc8"/></linearGradient>
<filter id="bl1" x="-30%" y="-60%" width="160%" height="220%"><feGaussianBlur stdDeviation="13"/></filter>
<filter id="bl2" x="-30%" y="-60%" width="160%" height="220%"><feGaussianBlur stdDeviation="7"/></filter>
<filter id="bl3" x="-30%" y="-60%" width="160%" height="220%"><feGaussianBlur stdDeviation="3.500"/></filter><filter id="bl4" x="-60%" y="-60%" width="220%" height="220%"><feGaussianBlur stdDeviation="10"/></filter></defs>
<rect width="352" height="120" fill="url(#bn0)"/>
<ellipse cx="300" cy="135" rx="120" ry="60" fill="#fbafc8" filter="url(#bl1)"/>
<ellipse cx="171" cy="58" rx="33" ry="50" fill="#fdb1c8" filter="url(#bl4)"/>
<ellipse cx="185" cy="112" rx="75" ry="32" fill="#fab0ca" filter="url(#bl1)"/>
<path d="M-40 -40L277 -34.6L183 5.4L150 19.4L129 33.4L113.5 47.4L101 61.9L88 76L70 90.1L44 104.4L20 118.4L-11 135.4L-31 145.4Z" fill="#d4a2f0" filter="url(#bl2)"/>
<path d="M-40 -40L268 -40L174 0L141 14L120 28L104.5 42L92 56.5L79 70.6L61 84.7L35 99L11 113L-20 130L-40 140Z" fill="#c8e0fe" filter="url(#bl3)"/>
</svg>
<div class="b" style="left:2164px;top:88px;width:96px;height:96px;border-radius:50%;background:#f2f4f7;border:8px solid #fff;box-shadow:0 10px 18px -4px rgba(16,24,40,.10),0 4px 6px -2px rgba(16,24,40,.04)"></div>
<span class="t" style="top:107px;font-size:49px;line-height:60px;color:#2e90fa;left:2195.3px;font-weight:700;">R</span>
<span class="t" style="top:216px;font-size:24.5px;line-height:31px;color:#101828;left:2163.8px;font-weight:700;letter-spacing:-0.610px;">Ruslan Fomin</span>
<span class="t" style="top:246px;font-size:16.5px;line-height:24px;color:#475467;left:2163.8px;letter-spacing:0.270px;">ruslanfom@gmail.com</span>
<span class="t" style="top:331px;font-size:18.5px;line-height:27px;color:#101828;left:2163.5px;font-weight:700;letter-spacing:-0.154px;">My Banks</span>
<svg class="ico" style="left:2377px;top:335px;stroke:#344054;stroke-width:1.700" width="20" height="20" viewBox="0 0 24 24"><path d="M12 4.200v15.600M4.200 12h15.600"/></svg>
<span class="t" style="top:335px;font-size:14.5px;line-height:20px;color:#475467;left:2406px;font-weight:700;letter-spacing:-0.658px;">Add Bank</span>
<div class="b" style="left:2195px;top:420px;width:275px;height:190px;border-radius:20px;overflow:hidden;border:1px solid #fff;box-shadow:8px 10px 16px 0 rgba(0,0,0,.05);background:linear-gradient(90deg,#0179fe,#4893ff)">
<div class="b" style="left:227.4px;top:0;width:46px;height:188px;background:linear-gradient(90deg,#0179fe,#3d8dff)"></div>
<svg style="left:228px;top:20px" width="46" height="168" viewBox="0 0 46 168" fill="none" stroke="rgba(255,255,255,.22)" stroke-width="1"><path d="M0 150 Q25 140 46 152M0 120 Q20 112 46 118"/></svg>
<div class="b" style="left:226px;top:151px;width:24px;height:17px;background:rgba(255,255,255,.07)"></div>
<div class="b" style="left:233.500px;top:155.500px;width:8.400px;height:8.400px;border-radius:50%;background:#eb001b"></div>
<div class="b" style="left:240.500px;top:155.500px;width:8.400px;height:8.400px;border-radius:50%;background:#f79e1b"></div>
<div class="b" style="left:238.500px;top:156.500px;width:4px;height:6.400px;border-radius:50%;background:#ff5f00"></div>
</div>
<span class="t" style="top:570px;font-size:16.5px;line-height:24px;color:#fff;left:2216.2px;font-weight:700;letter-spacing:-1.599px;clip-path:inset(0 0 8.4px 0);">1111</span>
<div class="b" style="left:2170px;top:388px;width:294px;height:190px;border-radius:20px;overflow:hidden;border:1px solid #fff;box-shadow:8px 10px 16px 0 rgba(0,0,0,.06);background:linear-gradient(90deg,#0179fe,#4893ff)">
<div class="b" style="left:228px;top:0;width:64px;height:188px;background:linear-gradient(90deg,#0179fe,#4590ff)"></div>
<svg style="left:228px;top:49px" width="66" height="140" viewBox="0 0 66 140" fill="none" stroke="rgba(255,255,255,.27)" stroke-width="1">
<path d="M0 4C14 6 24 12 34 12S54 8 64 3.500"/>
<path d="M0 6.500C20 10.500 30 9.800 40 9.400S56 7.500 64 6.500" opacity=".6"/>
<path d="M0 8C8 10 16 13 19 16C14 19.500 8 22 0 23"/>
<path d="M0 29.600Q32 25 64 24"/>
<path d="M0 36Q32 31.500 64 31"/>
<path d="M0 41Q32 38 64 37.500"/>
<path d="M0 45.600Q32 43 64 42"/>
<path d="M0 51.300L55 49"/>
<path d="M0 56L30 54"/>
<path d="M64 48.400C45 49.500 20 58 7 66.500C-1 72 2 78 8 81C22 88 44 91 64 91.200"/>
<path d="M64 51.300C46 53 22 60 10 67C4 71 8 75 14 77.500C28 83 46 83.500 64 83.200"/>
<path d="M64 54.100C48 55.500 28 58.500 18 63C12 66 15 70 22 73C34 77 50 77.800 64 77.500"/>
<path d="M64 57C52 57 34 57 26 60C21 62 24 66 30 68.500C40 71 52 71 64 70.700"/>
<path d="M64 60C54 59.500 42 59 37 61C36 63 44 64.200 64 64.400"/>
<path d="M0 91.200C14 95 24 98 34 98S54 96.500 64 94.600"/>
<path d="M0 102.600C12 105 22 106.500 34 106S54 104 64 101.500"/>
<path d="M0 113C14 113.500 28 114.500 40 116.500S56 119.500 64 121"/>
<path d="M0 118.600L17 119.200"/>
</svg>
<svg style="left:250.5px;top:18.8px" width="22" height="26" viewBox="0 0 22 26" fill="none" stroke="#fff" stroke-width="2.200" stroke-linecap="round">
<path d="M2.600 9.400 Q4.600 13 2.600 16.600"/><path d="M7 7 Q10.400 13 7 19"/><path d="M11.600 4.600 Q16.200 13 11.600 21.400"/><path d="M16.200 2.200 Q22 13 16.200 23.800"/></svg>
<div class="b" style="left:248.800px;top:151.200px;width:22px;height:16.400px;background:rgba(255,255,255,.08)"></div>
<div class="b" style="left:252.200px;top:155px;width:8.400px;height:8.400px;border-radius:50%;background:#eb001b"></div>
<div class="b" style="left:259.500px;top:155px;width:8.400px;height:8.400px;border-radius:50%;background:#f79e1b"></div>
<div class="b" style="left:258px;top:156px;width:3.800px;height:6.400px;border-radius:50%;background:#ff5f00"></div>
</div>
<span class="t" style="top:408px;font-size:16.5px;line-height:24px;color:#fff;left:2190.6px;font-weight:700;letter-spacing:-0.131px;">Plaid Checking</span>
<span class="t" style="top:432px;font-size:17.5px;line-height:24px;color:#fff;left:2191.6px;font-weight:700;font-family:'Liberation Serif',serif;letter-spacing:0.890px;-webkit-text-stroke:0.4px #fff;">$110.00</span>
<span class="t" style="top:493px;font-size:12.5px;line-height:18px;color:#fff;left:2191.6px;font-weight:700;letter-spacing:-0.482px;">Ruslan Fomin</span>
<div class="b" style="left:2327.4px;top:497.90000000000003px;width:9.4px;height:9.4px;border-radius:50%;background:#fff"></div><div class="b" style="left:2337.7000000000003px;top:497.90000000000003px;width:9.4px;height:9.4px;border-radius:50%;background:#fff"></div>
<span class="t" style="top:493px;font-size:12.5px;line-height:18px;color:#fff;left:2351.2px;font-weight:700;">/</span>
<div class="b" style="left:2358.8px;top:497.90000000000003px;width:9.4px;height:9.4px;border-radius:50%;background:#fff"></div><div class="b" style="left:2369.1000000000004px;top:497.90000000000003px;width:9.4px;height:9.4px;border-radius:50%;background:#fff"></div>
<div class="b" style="left:2191.8px;top:523.8499999999999px;width:10.9px;height:10.9px;border-radius:50%;background:#fff"></div><div class="b" style="left:2205.2000000000003px;top:523.8499999999999px;width:10.9px;height:10.9px;border-radius:50%;background:#fff"></div><div class="b" style="left:2218.6000000000004px;top:523.8499999999999px;width:10.9px;height:10.9px;border-radius:50%;background:#fff"></div><div class="b" style="left:2232.0px;top:523.8499999999999px;width:10.9px;height:10.9px;border-radius:50%;background:#fff"></div>
<div class="b" style="left:2249.7000000000003px;top:523.8499999999999px;width:10.9px;height:10.9px;border-radius:50%;background:#fff"></div><div class="b" style="left:2263.1000000000004px;top:523.8499999999999px;width:10.9px;height:10.9px;border-radius:50%;background:#fff"></div><div class="b" style="left:2276.5000000000005px;top:523.8499999999999px;width:10.9px;height:10.9px;border-radius:50%;background:#fff"></div><div class="b" style="left:2289.9px;top:523.8499999999999px;width:10.9px;height:10.9px;border-radius:50%;background:#fff"></div>
<div class="b" style="left:2307.6000000000004px;top:523.8499999999999px;width:10.9px;height:10.9px;border-radius:50%;background:#fff"></div><div class="b" style="left:2321.0000000000005px;top:523.8499999999999px;width:10.9px;height:10.9px;border-radius:50%;background:#fff"></div><div class="b" style="left:2334.4000000000005px;top:523.8499999999999px;width:10.9px;height:10.9px;border-radius:50%;background:#fff"></div><div class="b" style="left:2347.8px;top:523.8499999999999px;width:10.9px;height:10.9px;border-radius:50%;background:#fff"></div>
<span class="t" style="top:537px;font-size:16.5px;line-height:24px;color:#fff;left:2191.6px;font-weight:700;letter-spacing:2.757px;">0000</span>
<span class="t" style="top:648px;font-size:18.5px;line-height:27px;color:#101828;left:2164.5px;font-weight:700;letter-spacing:-0.087px;">Top categories</span>
<div class="b" style="left:2164px;top:696px;width:306px;height:72px;border-radius:12px;background:#f5faff"></div>
<div class="b" style="left:2180px;top:712px;width:40px;height:40px;border-radius:50%;background:#d1e9ff"></div>
<svg class="ico" style="left:2190px;top:722px;stroke:#175cd3;stroke-width:2" width="20" height="20" viewBox="0 0 24 24"><path d="M9.200 17.200v2.800h5.600v-2.800M6.800 17h10.400c1.700 0 2.500 0 3.200-.300.600-.300 1-.700 1.300-1.300.300-.600.300-1.500.300-3.200V7.800c0-1.700 0-2.500-.300-3.200-.300-.600-.700-1-1.300-1.300C19.700 3 18.900 3 17.200 3H6.800c-1.700 0-2.500 0-3.200.300-.600.300-1 .700-1.300 1.300C2 5.300 2 6.100 2 7.800v4.400c0 1.700 0 2.500.300 3.200.300.600.700 1 1.300 1.300.700.300 1.500.300 3.200.300Z"/></svg>
<span class="t" style="top:713px;font-size:14.5px;line-height:20px;color:#194185;left:2237.2px;letter-spacing:0.163px;-webkit-text-stroke:0.3px #194185;">Food and Drink</span>
<span class="t" style="top:713px;font-size:14.5px;line-height:20px;color:#194185;right:37.69999999999982px;">11</span>
<div class="b" style="left:2238px;top:739.8px;width:216px;height:8px;border-radius:4px;background:#d1e9ff;overflow:hidden"></div>
<div class="b" style="left:2238px;top:739.8px;width:84.9px;height:8px;border-radius:4px 0 0 4px;background:#175cd3"></div>
<div class="b" style="left:2164px;top:788px;width:306px;height:72px;border-radius:12px;background:#f6fef9"></div>
<div class="b" style="left:2180px;top:804px;width:40px;height:40px;border-radius:50%;background:#d1fadf"></div>
<svg class="ico" style="left:2190px;top:814px;stroke:#027a48;stroke-width:2" width="20" height="20" viewBox="0 0 24 24"><circle cx="15.200" cy="8.800" r="6.600"/><circle cx="8.800" cy="15.200" r="6.600" fill="#d1fadf"/></svg>
<span class="t" style="top:805px;font-size:14.5px;line-height:20px;color:#054f31;left:2238.2px;letter-spacing:0.295px;-webkit-text-stroke:0.3px #054f31;">Travel</span>
<span class="t" style="top:805px;font-size:14.5px;line-height:20px;color:#054f31;right:37.69999999999982px;">10</span>
<div class="b" style="left:2238px;top:831.8px;width:216px;height:8px;border-radius:4px;background:#d1fadf;overflow:hidden"></div>
<div class="b" style="left:2238px;top:831.8px;width:77.1px;height:8px;border-radius:4px 0 0 4px;background:#027a48"></div>
<div class="b" style="left:2164px;top:880px;width:306px;height:72px;border-radius:12px;background:#fef6fb"></div>
<div class="b" style="left:2180px;top:896px;width:40px;height:40px;border-radius:50%;background:#fce7f6"></div>
<svg class="ico" style="left:2190px;top:906px;stroke:#c11574;stroke-width:2" width="20" height="20" viewBox="0 0 24 24"><g transform="translate(12 12) scale(1.1) translate(-12 -12.300)" stroke-width="1.800"><path d="M16 8V6.500a4 4 0 0 0-8 0V8M4.600 8.700 4 16.400c-.2 1.600-.3 2.400 0 3 .2.500.6 1 1.100 1.300.6.300 1.400.3 3 .3h7.800c1.600 0 2.400 0 3-.3.500-.3.900-.8 1.100-1.300.3-.6.200-1.400 0-3l-.6-7.700c0-.3 0-.5-.2-.6-.1-.1-.4-.1-.8-.1H5.600c-.4 0-.7 0-.8.100-.2.100-.2.300-.2.600Z"/></g></svg>
<span class="t" style="top:897px;font-size:14.5px;line-height:20px;color:#851651;left:2238.2px;letter-spacing:0.269px;-webkit-text-stroke:0.3px #851651;">Transfer</span>
<span class="t" style="top:897px;font-size:14.5px;line-height:20px;color:#851651;right:37.69999999999982px;">4</span>
<div class="b" style="left:2238px;top:923.8px;width:216px;height:8px;border-radius:4px;background:#fce7f6;overflow:hidden"></div>
<div class="b" style="left:2238px;top:923.8px;width:30.9px;height:8px;border-radius:4px 0 0 4px;background:#c11574"></div>
<div class="b" style="left:2164px;top:972px;width:306px;height:72px;border-radius:12px;background:#fef6fb"></div>
<div class="b" style="left:2180px;top:988px;width:40px;height:40px;border-radius:50%;background:#fce7f6"></div>
<svg class="ico" style="left:2190px;top:998px;stroke:#c11574;stroke-width:2" width="20" height="20" viewBox="0 0 24 24"><g transform="translate(12 12) scale(1.1) translate(-12 -12.300)" stroke-width="1.800"><path d="M16 8V6.500a4 4 0 0 0-8 0V8M4.600 8.700 4 16.400c-.2 1.600-.3 2.400 0 3 .2.500.6 1 1.100 1.300.6.300 1.400.3 3 .3h7.800c1.600 0 2.400 0 3-.3.500-.3.900-.8 1.100-1.300.3-.6.200-1.400 0-3l-.6-7.700c0-.3 0-.5-.2-.6-.1-.1-.4-.1-.8-.1H5.600c-.4 0-.7 0-.8.100-.2.100-.2.300-.2.600Z"/></g></svg>
<span class="t" style="top:989px;font-size:14.5px;line-height:20px;color:#851651;left:2237.2px;letter-spacing:0.385px;-webkit-text-stroke:0.3px #851651;">Payment</span>
<span class="t" style="top:989px;font-size:14.5px;line-height:20px;color:#851651;right:37.69999999999982px;">3</span>
<div class="b" style="left:2238px;top:1015.8px;width:216px;height:8px;border-radius:4px;background:#fce7f6;overflow:hidden"></div>
<div class="b" style="left:2238px;top:1015.8px;width:23.1px;height:8px;border-radius:4px 0 0 4px;background:#c11574"></div>
</aside>
</body></html>
